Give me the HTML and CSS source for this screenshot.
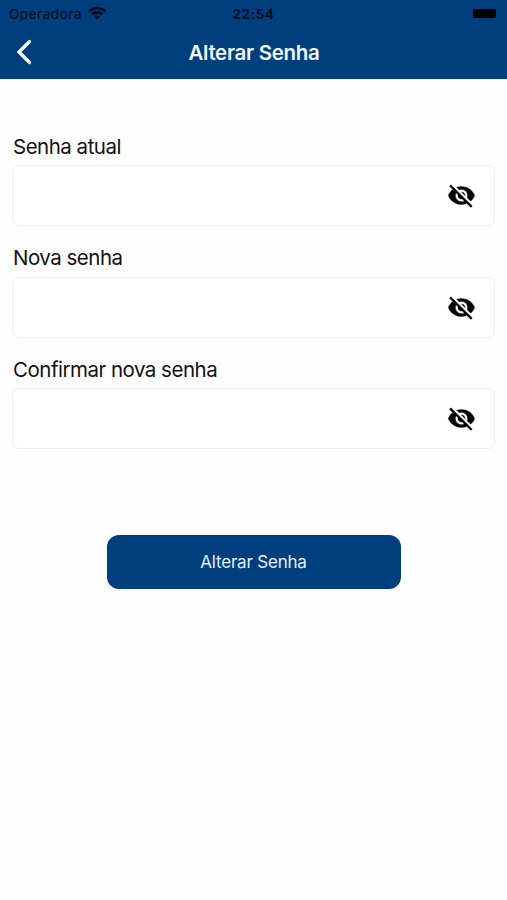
FILE: index.html
```html
<!DOCTYPE html>
<html lang="pt-BR">
<head>
  <meta charset="UTF-8">
  <title>Alterar Senha</title>
  <meta name="viewport" content="width=device-width, initial-scale=1">
  <link rel="stylesheet" href="styles.css">
</head>
<body>
  <svg class="sprite">
    <symbol id="eye-off" viewBox="0 0 24 24">
      <path d="M12 7c2.76 0 5 2.24 5 5 0 .65-.13 1.26-.36 1.83l2.92 2.92c1.51-1.26 2.7-2.89 3.43-4.75-1.73-4.39-6-7.5-11-7.5-1.4 0-2.74.25-3.98.7l2.16 2.16C10.74 7.13 11.35 7 12 7zM2 4.27l2.28 2.28.46.46C3.08 8.3 1.78 10.02 1 12c1.73 4.39 6 7.5 11 7.5 1.55 0 3.03-.3 4.38-.84l.42.42L19.73 22 21 20.73 3.27 3 2 4.27zM7.53 9.8l1.55 1.55c-.05.21-.08.43-.08.65 0 1.66 1.34 3 3 3 .22 0 .44-.03.65-.08l1.55 1.55c-.67.33-1.41.53-2.2.53-2.76 0-5-2.24-5-5 0-.79.2-1.53.53-2.2zm4.31-.78l3.15 3.15.02-.16c0-1.66-1.34-3-3-3l-.17.01z"/>
    </symbol>
  </svg>
  <header>
    <div class="status">
      <div class="carrier">
        <span>Operadora</span>
        <svg class="wifi" viewBox="0 0 18 14">
          <path d="M1 5.2a11.6 11.6 0 0 1 16 0M3.8 8.4a7.6 7.6 0 0 1 10.4 0"/>
          <path class="dot" d="M9 13.8L5.9 10.7a4.5 4.5 0 0 1 6.2 0z"/>
        </svg>
      </div>
      <span class="time">22:54</span>
      <div class="power"><span class="battery"></span></div>
    </div>
    <div class="navbar">
      <a class="back" href="#" aria-label="Voltar">
        <svg viewBox="0 0 16 26"><path d="M13.5 2.5L3 13l10.5 10.5"/></svg>
      </a>
      <h1>Alterar Senha</h1>
    </div>
  </header>
  <form>
    <label for="current">Senha atual</label>
    <div class="field">
      <input type="password" id="current">
      <button type="button" class="toggle" aria-label="Mostrar senha"><svg><use href="#eye-off"/></svg></button>
    </div>
    <label for="new">Nova senha</label>
    <div class="field">
      <input type="password" id="new">
      <button type="button" class="toggle" aria-label="Mostrar senha"><svg><use href="#eye-off"/></svg></button>
    </div>
    <label for="confirm">Confirmar nova senha</label>
    <div class="field">
      <input type="password" id="confirm">
      <button type="button" class="toggle" aria-label="Mostrar senha"><svg><use href="#eye-off"/></svg></button>
    </div>
    <button type="submit" class="submit">Alterar Senha</button>
  </form>
</body>
</html>
```
FILE: styles.css
```css
* {
  box-sizing: border-box;
}
body {
  margin: 0;
  min-height: 900px;
  background: #fefefe;
  color: #111;
  font-family: Inter, "Liberation Sans", sans-serif;
}
svg {
  display: block;
}
.sprite {
  display: none;
}
header {
  height: 79px;
  background: #003e7e;
}
.status {
  display: grid;
  grid-template-columns: 1fr auto 1fr;
  align-items: center;
  height: 27px;
  padding: 0 11px 0 9px;
  color: #000a18;
  font-size: 13.5px;
}
.carrier {
  display: flex;
  align-items: center;
  gap: 6px;
  letter-spacing: .55px;
}
.wifi {
  width: 18px;
  height: 14px;
  margin-bottom: 2px;
  fill: none;
  stroke: #000a18;
  stroke-width: 2.6;
}
.wifi .dot {
  fill: #000a18;
  stroke: none;
}
.time {
  padding-left: 2px;
  font-weight: 600;
  letter-spacing: .7px;
}
.power {
  display: flex;
  justify-content: flex-end;
}
.battery {
  width: 23px;
  height: 9px;
  margin-bottom: 1px;
  border-radius: 2px;
  background: #000;
}
.navbar {
  display: grid;
  grid-template-columns: 48px 1fr 48px;
  align-items: center;
  height: 50px;
}
.back {
  padding-left: 16px;
}
.back svg {
  width: 16px;
  height: 26px;
  fill: none;
  stroke: #fff;
  stroke-width: 3.3;
  stroke-linecap: round;
}
h1 {
  margin: 0;
  padding-left: 1px;
  color: #f4f9ff;
  font-size: 20.5px;
  font-weight: 600;
  letter-spacing: -.3px;
  text-align: center;
}
form {
  display: flex;
  flex-direction: column;
  padding: 54px 12px 0;
}
label {
  height: 32.4px;
  padding-left: 1px;
  font-size: 20.5px;
  letter-spacing: -.5px;
  line-height: 27px;
}
.field {
  display: flex;
  align-items: center;
  height: 61px;
  margin-bottom: 18px;
  padding-right: 18px;
  border: 1px solid #efefef;
  border-radius: 7px;
  background: #fff;
}
input {
  flex: 1;
  height: 100%;
  padding: 0 12px;
  border: 0;
  outline: 0;
  background: none;
  font: inherit;
}
.toggle {
  padding: 0;
  border: 0;
  background: none;
}
.toggle svg {
  width: 29px;
  height: 29px;
  stroke: #000;
  stroke-width: .2;
}
.submit {
  align-self: center;
  width: 294px;
  height: 54px;
  margin-top: 67.8px;
  border: 0;
  border-radius: 12px;
  background: #003e7e;
  color: #e6f1ff;
  font-family: inherit;
  font-size: 17px;
  letter-spacing: -.2px;
}
```
